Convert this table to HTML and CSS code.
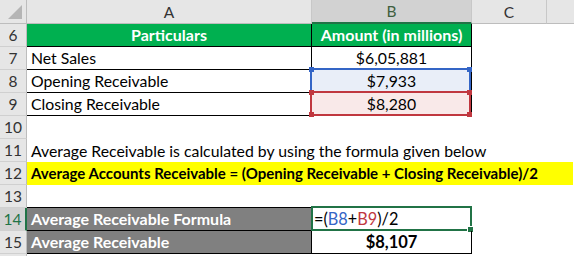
FILE: index.html
```html
<!DOCTYPE html>
<html>
<head>
<meta charset="utf-8">
<link rel="stylesheet" href="styles.css">
</head>
<body>
<div class="sheet">
  <div class="corner"><span class="tri"></span></div>
  <div class="colhead">A</div>
  <div class="colhead active">B</div>
  <div class="colhead">C</div>
  <div class="colhead last"></div>

  <div class="rowhead">6</div>
  <div class="cell th bl">Particulars</div>
  <div class="cell th bl">Amount (in millions)</div>
  <div class="cell"></div>
  <div class="cell"></div>

  <div class="rowhead">7</div>
  <div class="cell bl">Net Sales</div>
  <div class="cell bl num">$6,05,881</div>
  <div class="cell"></div>
  <div class="cell"></div>

  <div class="rowhead">8</div>
  <div class="cell bl">Opening Receivable</div>
  <div class="cell bl num ref-b8"><span class="ref blue"><i class="h tl"></i><i class="h tr"></i></span>$7,933</div>
  <div class="cell"></div>
  <div class="cell"></div>

  <div class="rowhead">9</div>
  <div class="cell bl">Closing Receivable</div>
  <div class="cell bl num ref-b9"><span class="ref red"><i class="h tl"></i><i class="h tr"></i><i class="h bl-h"></i><i class="h br"></i></span>$8,280</div>
  <div class="cell"></div>
  <div class="cell"></div>

  <div class="rowhead">10</div>
  <div class="cell span"></div>

  <div class="rowhead">11</div>
  <div class="cell span">Average Receivable is calculated by using the formula given below</div>

  <div class="rowhead">12</div>
  <div class="cell span hl">Average Accounts Receivable = (Opening Receivable + Closing Receivable)/2</div>

  <div class="rowhead">13</div>
  <div class="cell bb"></div>
  <div class="cell bb"></div>
  <div class="cell"></div>
  <div class="cell"></div>

  <div class="rowhead selrow">14</div>
  <div class="cell gray bl">Average Receivable Formula</div>
  <div class="cell bl edit"><span class="active-box"><i class="fill"></i></span>=(<span class="r-blue">B8</span>+<span class="r-red">B9</span>)/2</div>
  <div class="cell"></div>
  <div class="cell"></div>

  <div class="rowhead">15</div>
  <div class="cell gray bl">Average Receivable</div>
  <div class="cell bl num strong">$8,107</div>
  <div class="cell"></div>
  <div class="cell"></div>

  <div class="rowhead rest"></div>
  <div class="cell"></div>
  <div class="cell"></div>
  <div class="cell"></div>
  <div class="cell"></div>
</div>
</body>
</html>
```

FILE: styles.css
```css
html, body {
  margin: 0;
  padding: 0;
  background: #ffffff;
}

.sheet {
  width: 574px;
  height: 256px;
  overflow: hidden;
  display: grid;
  grid-template-columns: 27px 285px 160px 75px 27px;
  grid-template-rows: 24px repeat(10, 23px) 1fr;
  font-family: Lato, "Open Sans", sans-serif;
  font-size: 15px;
  color: #000;
}

.corner {
  background: #e6e6e6;
  border-right: 1px solid #bdbdbd;
  border-bottom: 1px solid #bdbdbd;
  box-sizing: border-box;
  position: relative;
}

.tri {
  position: absolute;
  left: 8px;
  top: 5px;
  width: 0;
  height: 0;
  border-left: 14px solid transparent;
  border-bottom: 14px solid #b5b5b5;
}

.colhead {
  background: #e6e6e6;
  border-right: 1px solid #c8c8c8;
  border-bottom: 1px solid #bdbdbd;
  box-sizing: border-box;
  display: flex;
  align-items: center;
  justify-content: center;
  color: #333;
  font-size: 15.5px;
}

.colhead.active {
  background: #d2d2d2;
  color: #3f5f3f;
  border-bottom: 2px solid #217346;
}

.colhead.last {
  border-right: none;
}

.rowhead {
  background: #e6e6e6;
  border-right: 1px solid #bdbdbd;
  border-bottom: 1px solid #d0d0d0;
  box-sizing: border-box;
  display: flex;
  align-items: center;
  justify-content: center;
  color: #333;
  font-size: 15.5px;
}

.rowhead.selrow {
  background: #d2d2d2;
  color: #217346;
  border-right: 2px solid #217346;
}

.rowhead.rest {
  border-bottom: none;
}

.cell {
  box-sizing: border-box;
  display: flex;
  align-items: center;
  padding: 0 4px 1px 4px;
  white-space: nowrap;
  position: relative;
  font-size: 15.8px;
}

.cell.bl {
  border-right: 1px solid #000;
  border-bottom: 1px solid #000;
}

.cell.bb {
  border-bottom: 1px solid #000;
}

.cell.span {
  grid-column: 2 / -1;
}

.cell.th {
  background: #00b050;
  color: #fff;
  font-weight: 700;
  font-size: 16px;
  justify-content: center;
}

.cell.num {
  justify-content: center;
}

.cell.strong {
  font-weight: 700;
  font-size: 16.5px;
}

.cell.hl {
  background: #ffff00;
  font-weight: 700;
  font-size: 15px;
  margin-right: 1px;
}

.cell.gray {
  background: #808080;
  color: #fff;
  font-weight: 700;
  font-size: 16px;
}

.ref-b8 {
  background: #e9eef8;
}

.ref-b9 {
  background: #f9e9e9;
}

.ref {
  position: absolute;
  top: -2px;
  left: -2px;
  right: 0;
  bottom: -1px;
  border: 2px solid;
  pointer-events: none;
}

.ref.blue {
  border-color: #3465c6;
}

.ref.red {
  border-color: #c0373f;
}

.h {
  position: absolute;
  width: 5px;
  height: 5px;
}

.ref.blue .h { background: #3465c6; }
.ref.red .h { background: #c0373f; }

.h.tl { top: -3px; left: -3px; }
.h.tr { top: -3px; right: -3px; }
.h.bl-h { bottom: -3px; left: -3px; }
.h.br { bottom: -3px; right: -3px; }

.cell.edit {
  padding-left: 2px;
  font-size: 16.3px;
}

.active-box {
  position: absolute;
  top: -2px;
  left: -1px;
  right: -1px;
  bottom: -1px;
  border: 2px solid #217346;
}

.fill {
  position: absolute;
  right: -4px;
  bottom: -4px;
  width: 5px;
  height: 5px;
  background: #217346;
  border: 1px solid #fff;
}

.r-blue {
  color: #3465c6;
}

.r-red {
  color: #c0373f;
}
```
